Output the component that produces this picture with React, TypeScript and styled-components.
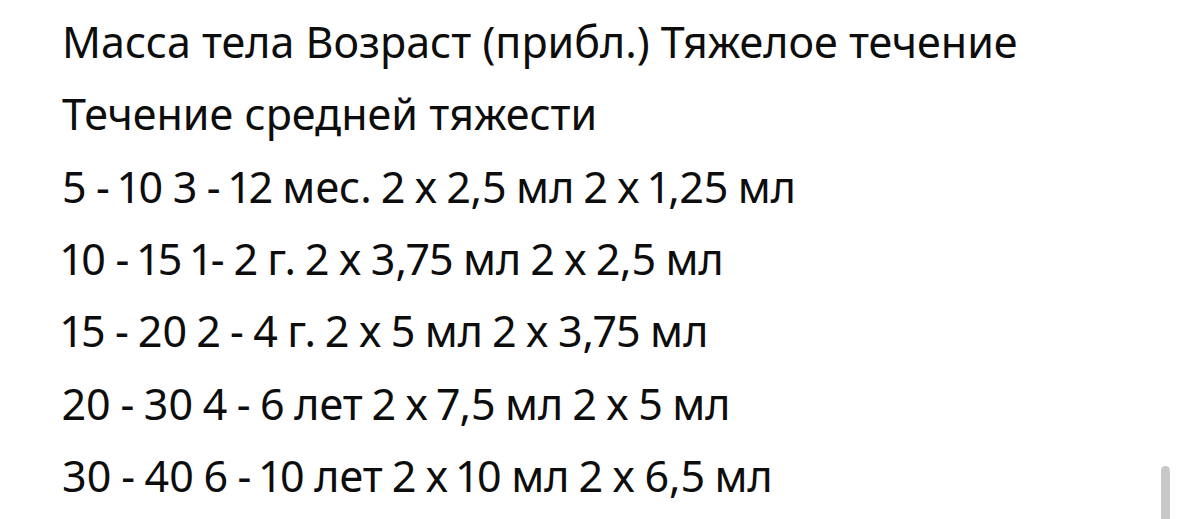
import React from 'react';
import styled, { createGlobalStyle } from 'styled-components';

const GlobalStyle = createGlobalStyle`
	html, body {
		margin: 0;
		padding: 0;
		background: #ffffff;
		overflow: hidden;
	}
`;

const Page = styled.div`
	position: relative;
	width: 1179px;
	height: 519px;
	overflow: hidden;
	background: #ffffff;
`;

const Content = styled.div`
	padding: 6px 0 0 62px;
	font-family: 'Noto Sans', 'Open Sans', sans-serif;
	font-size: 43px;
	line-height: 72.33px;
	color: #0d0d0d;
	font-variant-numeric: proportional-nums;
`;

const Line = styled.p<{ $numeric?: boolean }>`
	margin: 0;
	white-space: nowrap;
	word-spacing: ${(p) => (p.$numeric ? '-1.75px' : 'normal')};
`;

const ScrollThumb = styled.div`
	position: absolute;
	right: 9px;
	top: 466px;
	width: 9px;
	height: 70px;
	border-radius: 5px;
	background: #c8c8c8;
`;

const headings = ['Масса тела Возраст (прибл.) Тяжелое течение', 'Течение средней тяжести'];

const rows = [
	'5 - 10 3 - 12 мес. 2 x 2,5 мл 2 x 1,25 мл',
	'10 - 15 1- 2 г. 2 x 3,75 мл 2 x 2,5 мл',
	'15 - 20 2 - 4 г. 2 x 5 мл 2 x 3,75 мл',
	'20 - 30 4 - 6 лет 2 x 7,5 мл 2 x 5 мл',
	'30 - 40 6 - 10 лет 2 x 10 мл 2 x 6,5 мл',
];

const App: React.FC = () => {
	return (
		<Page>
			<GlobalStyle />
			<Content>
				{headings.map((text) => (
					<Line key={text}>{text}</Line>
				))}
				{rows.map((text) => (
					<Line key={text} $numeric>
						{text}
					</Line>
				))}
			</Content>
			<ScrollThumb />
		</Page>
	);
};

export default App;
